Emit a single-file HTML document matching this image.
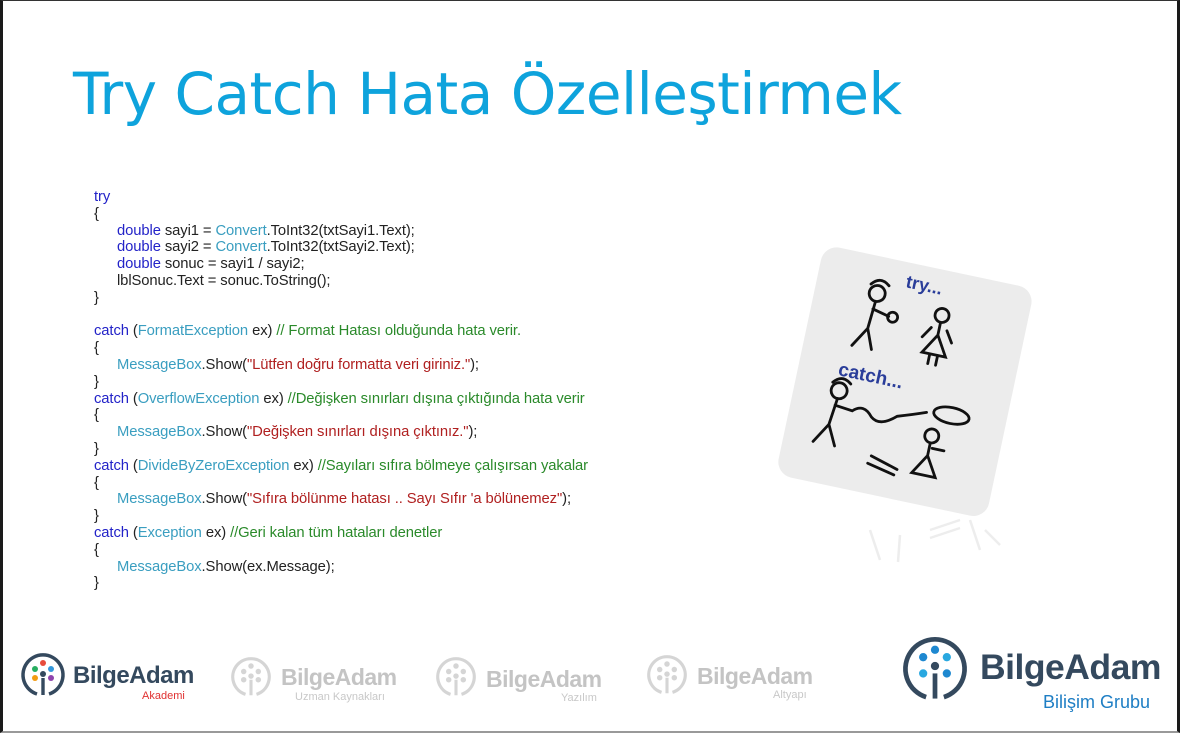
<!DOCTYPE html>
<html><head><meta charset="utf-8"><style>
body{margin:0;width:1180px;height:733px;overflow:hidden;background:#fff;position:relative;font-family:"Liberation Sans",sans-serif}
.frame{position:absolute;left:0;top:0;width:1180px;height:733px;box-sizing:border-box;border-top:1px solid #333;border-left:3px solid #1a1a1a;border-right:3px solid #1a1a1a;border-bottom:2px solid #999}
h1{position:absolute;left:73px;top:60px;margin:0;font-weight:normal;color:#0ea3dc;white-space:nowrap;font-family:"DejaVu Sans","Liberation Sans",sans-serif;font-size:58px;letter-spacing:-0.5px}
.code{position:absolute;left:94px;top:189px;font-size:14.8px;line-height:16.8px;color:#222;white-space:pre;letter-spacing:-0.1px}
.k{color:#2323c8}.t{color:#3a9ec0}.c{color:#2a8a2a}.s{color:#b02020}
.i{padding-left:23px}
.logo{position:absolute}
.bn{position:absolute;font-weight:bold;white-space:nowrap;letter-spacing:-0.5px}
.sub{position:absolute;white-space:nowrap;font-size:11px}
</style></head><body>
<h1>Try Catch Hata Özelleştirmek</h1>
<div class="code"><span class="k">try</span>
{
<span class="i"><span class="k">double</span> sayi1 = <span class="t">Convert</span>.ToInt32(txtSayi1.Text);</span>
<span class="i"><span class="k">double</span> sayi2 = <span class="t">Convert</span>.ToInt32(txtSayi2.Text);</span>
<span class="i"><span class="k">double</span> sonuc = sayi1 / sayi2;</span>
<span class="i">lblSonuc.Text = sonuc.ToString();</span>
}

<span class="k">catch</span> (<span class="t">FormatException</span> ex) <span class="c">// Format Hatası olduğunda hata verir.</span>
{
<span class="i"><span class="t">MessageBox</span>.Show(<span class="s">"Lütfen doğru formatta veri giriniz."</span>);</span>
}
<span class="k">catch</span> (<span class="t">OverflowException</span> ex) <span class="c">//Değişken sınırları dışına çıktığında hata verir</span>
{
<span class="i"><span class="t">MessageBox</span>.Show(<span class="s">"Değişken sınırları dışına çıktınız."</span>);</span>
}
<span class="k">catch</span> (<span class="t">DivideByZeroException</span> ex) <span class="c">//Sayıları sıfıra bölmeye çalışırsan yakalar</span>
{
<span class="i"><span class="t">MessageBox</span>.Show(<span class="s">"Sıfıra bölünme hatası .. Sayı Sıfır 'a bölünemez"</span>);</span>
}
<span class="k">catch</span> (<span class="t">Exception</span> ex) <span class="c">//Geri kalan tüm hataları denetler</span>
{
<span class="i"><span class="t">MessageBox</span>.Show(ex.Message);</span>
}</div>

<svg style="position:absolute;left:770px;top:230px" width="280" height="340" viewBox="0 0 280 340">
<g transform="rotate(12 140 140)">
<rect x="30" y="35" width="215" height="235" rx="16" fill="#ececec"/>
<text x="118" y="60" font-family="Liberation Sans" font-weight="bold" font-size="18" fill="#2a3d9a">try...</text>
<text x="70" y="160" font-family="Liberation Sans" font-weight="bold" font-size="19" fill="#2a3d9a">catch...</text>
<g stroke="#111" stroke-width="2.8" fill="none" stroke-linecap="round">
<circle cx="92" cy="72" r="8"/><path d="M84 64 q8 -10 18 -2 M92 80 L90 108 M90 108 L78 128 M90 108 L98 128 M91 88 L108 92"/>
<circle cx="112" cy="92" r="5"/>
<circle cx="160" cy="80" r="7"/><path d="M160 87 L160 100 L148 120 L172 120 L160 100 M152 94 L145 105 M168 94 L175 105 M156 120 L156 130 M164 120 L164 130"/>
<circle cx="75" cy="175" r="8"/><path d="M67 168 q8 -10 18 -2 M75 183 L72 210 M72 210 L60 230 M72 210 L82 230 M74 190 L92 192 q10 -10 20 2 q10 8 25 -6 q15 -5 28 -10"/>
<ellipse cx="190" cy="176" rx="18" ry="8"/>
<circle cx="175" cy="200" r="7"/><path d="M175 207 L175 220 L163 240 L187 240 L175 220 M178 212 L190 212 M120 232 L148 240 M118 240 L146 246"/>
</g></g>
<g opacity="0.15" stroke="#888" stroke-width="2.5" fill="none"><path d="M100 300 L110 330 M130 305 L128 332 M160 300 L190 290 M160 308 L190 298 M200 290 L210 320 M215 300 L230 315"/></g>
</svg>

<svg class="logo" style="left:20px;top:652px" width="46" height="46" viewBox="0 0 46 46">
<path d="M17 42 A20 20 0 1 1 29 42" fill="none" stroke="#34495e" stroke-width="3.5"/>
<rect x="21.3" y="26" width="3.4" height="17" fill="#34495e"/>
<circle cx="23" cy="11" r="3" fill="#e74c3c"/><circle cx="15" cy="17" r="3" fill="#27ae60"/><circle cx="31" cy="17" r="3" fill="#3498db"/>
<circle cx="23" cy="22" r="3" fill="#34495e"/><circle cx="15" cy="26" r="3" fill="#f39c12"/><circle cx="31" cy="26" r="3" fill="#8e44ad"/>
</svg>
<div class="bn" style="left:73px;top:662px;font-size:24px;color:#34495e">BilgeAdam</div>
<div class="sub" style="left:142px;top:690px;color:#e03030">Akademi</div>

<svg class="logo" style="left:230px;top:656px" width="42" height="42" viewBox="0 0 46 46">
<g opacity="0.3"><path d="M17 42 A20 20 0 1 1 29 42" fill="none" stroke="#777" stroke-width="3.5"/><rect x="21.3" y="26" width="3.4" height="17" fill="#777"/>
<g fill="#777"><circle cx="23" cy="11" r="3"/><circle cx="15" cy="17" r="3"/><circle cx="31" cy="17" r="3"/><circle cx="23" cy="22" r="3"/><circle cx="15" cy="26" r="3"/><circle cx="31" cy="26" r="3"/></g></g></svg>
<div class="bn" style="left:281px;top:664px;font-size:23px;color:#c4c4c4">BilgeAdam</div>
<div class="sub" style="left:295px;top:691px;color:#c8c8c8">Uzman Kaynakları</div>

<svg class="logo" style="left:435px;top:656px" width="42" height="42" viewBox="0 0 46 46">
<g opacity="0.3"><path d="M17 42 A20 20 0 1 1 29 42" fill="none" stroke="#777" stroke-width="3.5"/><rect x="21.3" y="26" width="3.4" height="17" fill="#777"/>
<g fill="#777"><circle cx="23" cy="11" r="3"/><circle cx="15" cy="17" r="3"/><circle cx="31" cy="17" r="3"/><circle cx="23" cy="22" r="3"/><circle cx="15" cy="26" r="3"/><circle cx="31" cy="26" r="3"/></g></g></svg>
<div class="bn" style="left:486px;top:666px;font-size:23px;color:#c4c4c4">BilgeAdam</div>
<div class="sub" style="left:561px;top:692px;color:#c8c8c8">Yazılım</div>

<svg class="logo" style="left:646px;top:654px" width="42" height="42" viewBox="0 0 46 46">
<g opacity="0.3"><path d="M17 42 A20 20 0 1 1 29 42" fill="none" stroke="#777" stroke-width="3.5"/><rect x="21.3" y="26" width="3.4" height="17" fill="#777"/>
<g fill="#777"><circle cx="23" cy="11" r="3"/><circle cx="15" cy="17" r="3"/><circle cx="31" cy="17" r="3"/><circle cx="23" cy="22" r="3"/><circle cx="15" cy="26" r="3"/><circle cx="31" cy="26" r="3"/></g></g></svg>
<div class="bn" style="left:697px;top:663px;font-size:23px;color:#c4c4c4">BilgeAdam</div>
<div class="sub" style="left:773px;top:689px;color:#c8c8c8">Altyapı</div>

<svg class="logo" style="left:901px;top:635px" width="68" height="68" viewBox="0 0 46 46">
<path d="M17 42 A20 20 0 1 1 29 42" fill="none" stroke="#34495e" stroke-width="3.2"/>
<rect x="21.4" y="26" width="3.2" height="17" fill="#34495e"/>
<circle cx="23" cy="10" r="2.8" fill="#1e88d0"/><circle cx="15" cy="15" r="2.8" fill="#1e88d0"/><circle cx="31" cy="15" r="2.8" fill="#29a8e0"/>
<circle cx="23" cy="21" r="2.8" fill="#34495e"/><circle cx="15" cy="26" r="2.8" fill="#29a8e0"/><circle cx="31" cy="26" r="2.8" fill="#1e88d0"/>
</svg>
<div class="bn" style="left:980px;top:647px;font-size:35.5px;color:#34495e">BilgeAdam</div>
<div class="sub" style="left:1043px;top:692px;font-size:18px;color:#1e7ec4">Bilişim Grubu</div>

<div class="frame"></div>
</body></html>
